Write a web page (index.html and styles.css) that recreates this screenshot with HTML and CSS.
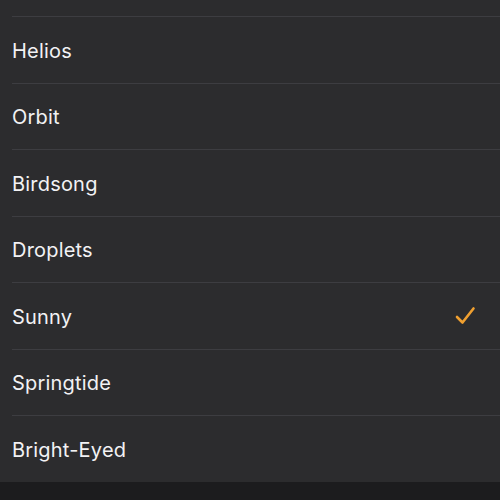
FILE: index.html
```html
<!DOCTYPE html>
<html>
<head>
<meta charset="utf-8">
<link rel="stylesheet" href="styles.css">
</head>
<body>
<div class="list">
  <div class="top"></div>
  <div class="row"><span class="label">Helios</span></div>
  <div class="row"><span class="label">Orbit</span></div>
  <div class="row"><span class="label">Birdsong</span></div>
  <div class="row"><span class="label">Droplets</span></div>
  <div class="row"><span class="label">Sunny</span>
    <svg class="check" width="22" height="20" viewBox="0 0 22 20"><path d="M3 11 L8.5 16.5 L19.5 2.5" fill="none" stroke="#f0a030" stroke-width="2.6" stroke-linecap="round" stroke-linejoin="round"/></svg>
  </div>
  <div class="row"><span class="label">Springtide</span></div>
  <div class="row"><span class="label">Bright-Eyed</span></div>
</div>
</body>
</html>
```
FILE: styles.css
```css
html, body {
  margin: 0;
  padding: 0;
  background: #1c1c1e;
  height: 500px;
  overflow: hidden;
}
.list {
  background: #2c2c2e;
  font-family: Inter, "Liberation Sans", sans-serif;
}
.top {
  height: 16px;
}
.row {
  margin-left: 12px;
  border-top: 1px solid #3d3d41;
  height: 65.5px;
  display: flex;
  align-items: center;
  justify-content: space-between;
  padding-right: 24px;
}
.label {
  color: #f2f2f4;
  font-size: 20px;
  letter-spacing: 0.2px;
  padding-top: 2px;
}
.check {
  display: block;
  margin-top: 1px;
}
```
